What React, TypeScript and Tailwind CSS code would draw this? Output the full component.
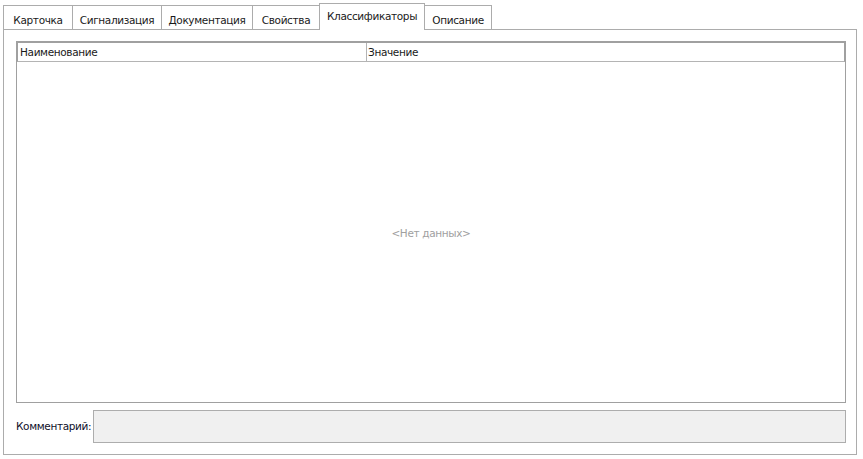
import React from "react";

type Tab = { label: string; width: string };

const tabs: Tab[] = [
  { label: "Карточка", width: "w-[70px]" },
  { label: "Сигнализация", width: "w-[90px]" },
  { label: "Документация", width: "w-[92px]" },
  { label: "Свойства", width: "w-[68px]" },
  { label: "Классификаторы", width: "w-[106px]" },
  { label: "Описание", width: "w-[68px]" },
];

const ACTIVE = "Классификаторы";

export default function App() {
  return (
    <div
      className="w-[863px] h-[459px] bg-white pl-[3px] pt-[3px] pr-[6px] pb-[4px] flex flex-col text-[10.5px] tracking-[-0.35px] text-[#1a1a1a]"
      style={{ fontFamily: '"DejaVu Sans", Verdana, sans-serif' }}
    >
      {/* tab strip */}
      <div className="flex items-end h-[26px] relative z-10">
        {tabs.map((t, i) => {
          const active = t.label === ACTIVE;
          return (
            <div
              key={t.label}
              className={
                active
                  ? `${t.width} ${i > 0 ? "-ml-px" : ""} h-[27px] -mb-px relative z-10 bg-white border border-b-0 border-[#acacac] flex justify-center pt-[6px] leading-[13px] whitespace-nowrap`
                  : `${t.width} ${i > 0 ? "-ml-px" : ""} h-[24px] bg-white border border-b-0 border-[#acacac] flex justify-center pt-[8px] leading-[13px] whitespace-nowrap`
              }
            >
              {t.label}
            </div>
          );
        })}
      </div>

      {/* tab page */}
      <div className="flex-1 border border-[#acacac] pl-[12px] pr-[10px] pt-[11px] pb-[11px] flex flex-col gap-[7px] min-h-0">
        {/* grid */}
        <div className="flex-1 border border-[#a0a0a0] flex flex-col min-h-0">
          <div className="flex h-[20px] border border-t-[#a0a0a0] border-x-[#a0a0a0] border-b-[#b4b4b4] leading-[18px]">
            <div className="w-[349px] border-r border-[#b4b4b4] pl-[2px]">Наименование</div>
            <div className="flex-1 pl-[1px]">Значение</div>
          </div>
          <div className="flex-1 flex items-center justify-center pt-[3px] text-[#a0a0a0]">
            &lt;Нет данных&gt;
          </div>
        </div>

        {/* comment */}
        <div className="flex items-center h-[33px]">
          <div className="w-[77px] whitespace-nowrap text-[#10102a]">Комментарий:</div>
          <div className="flex-1 h-[33px] bg-[#f0f0f0] border border-[#adadad]" />
        </div>
      </div>
    </div>
  );
}
